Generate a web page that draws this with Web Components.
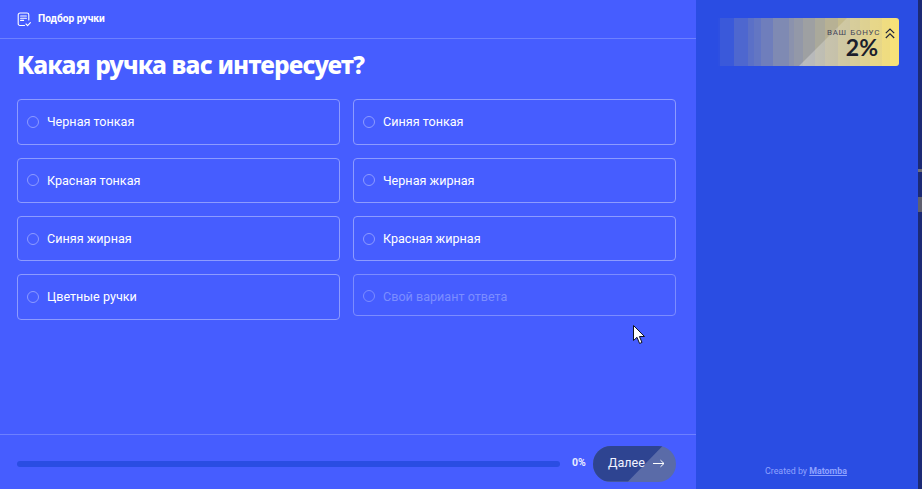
<!DOCTYPE html>
<html lang="ru"><head><meta charset="utf-8"><title>Подбор ручки</title>
<style>
html,body{margin:0;height:100%;overflow:hidden}
body{font-family:"Roboto","Noto Sans",sans-serif;background:#1c2a75}
</style></head><body>
<quiz-app>
  <quiz-main slot="main">
    <quiz-header>Подбор ручки</quiz-header>
    <h-title>Какая ручка вас интересует?</h-title>
    <quiz-options>
      <quiz-option>Черная тонкая</quiz-option>
      <quiz-option>Синяя тонкая</quiz-option>
      <quiz-option>Красная тонкая</quiz-option>
      <quiz-option>Черная жирная</quiz-option>
      <quiz-option>Синяя жирная</quiz-option>
      <quiz-option>Красная жирная</quiz-option>
      <quiz-option>Цветные ручки</quiz-option>
      <quiz-option placeholder>Свой вариант ответа</quiz-option>
    </quiz-options>
    <quiz-footer></quiz-footer>
    <mouse-cursor></mouse-cursor>
  </quiz-main>
  <quiz-side slot="side"></quiz-side>
</quiz-app>
<script>
function def(name, html){
  customElements.define(name, class extends HTMLElement{
    constructor(){super();this.attachShadow({mode:'open'}).innerHTML=html;}
  });
}
/* stepped colour bands of the bonus ribbon */
const edges=[0,2,16,30,36,43,55,71,76,85,97,107,120,132,142,152,164,172,181];
const bands=edges.slice(0,-1).map((e,i)=>{
  const n=edges[i+1],t=Math.pow((e+n)/2/181,.85);
  const c=[42+209*t,77+149*t,227-117*t].map(Math.round).join(',');
  return `rgb(${c}) ${e}px ${n}px`;
}).join(',');
def('quiz-app',`<style>:host{display:flex;width:922px;height:489px}
.s{width:4px;flex:none;background:linear-gradient(#1c2a75 0 169px,#6e6f78 169px 172px,#1c2a75 172px 197px,#5f6070 197px 212px,#1c2a75 212px)}</style>
<slot name="main"></slot><slot name="side"></slot><div class="s"></div>`);
def('quiz-main',`<style>:host{position:relative;display:flex;flex-direction:column;width:696px;height:489px;background:#465dff;color:#fff;flex:none}</style><slot></slot>`);
def('quiz-header',`<style>:host{display:flex;align-items:center;gap:7px;height:38px;padding-left:17px;border-bottom:1px solid #6d80ff;font:700 10.2px/1 "Roboto",sans-serif;flex:none}
svg{display:block}</style>
<svg width="14" height="15" viewBox="0 0 14 15" fill="none" stroke="#fff" stroke-width="1.1" stroke-linecap="round" stroke-linejoin="round"><path d="M7.5 13.5H3a1.8 1.8 0 0 1-1.8-1.8V2.8A1.8 1.8 0 0 1 3 1h7a1.8 1.8 0 0 1 1.8 1.8V8"/><path d="M3.6 4h5.8M3.6 6.2h5.8M3.6 8.4h3"/><path d="M9 12l1.6 1.6L13.4 10.6"/></svg><slot></slot>`);
def('h-title',`<style>:host{display:block;margin:10px 0 0 17px;height:31px;font:800 24.5px/31px "Noto Sans",sans-serif;letter-spacing:-.83px;white-space:nowrap;flex:none}</style><slot></slot>`);
def('quiz-options',`<style>:host{display:grid;grid-template-columns:323px 323px;column-gap:13px;row-gap:13px;grid-auto-rows:45.33px;margin:19.4px 0 0 17px;flex:none}</style><slot></slot>`);
customElements.define('quiz-option',class extends HTMLElement{
  constructor(){super();this.attachShadow({mode:'open'}).innerHTML=`<style>
  :host{display:flex;align-items:center;box-sizing:border-box;height:100%;padding:1px 0 0 9px;gap:8px;border:1px solid #8d9bff;border-radius:4px;font:400 12.6px/1 "Roboto",sans-serif;color:#fff;white-space:nowrap}
  :host([placeholder]){height:42px;border-color:#7c8cff;color:#7c8dff;padding-top:3px}
  :host([placeholder]) i{border-color:#7c8cff}
  i{width:10px;height:10px;border:1px solid #8d9bff;border-radius:50%;flex:none;margin-top:-1px}
  </style><i></i><slot></slot>`;}
});
def('quiz-footer',`<style>:host{display:flex;align-items:center;box-sizing:border-box;margin-top:auto;height:55px;padding:0 20px 0 17px;border-top:1px solid #6d80ff;flex:none}
.bar{flex:none;width:543px;height:6px;border-radius:3px;background:#2a4de3;margin-top:3px}
.pct{margin:3px 0 0 12px;width:21px;font:700 10.5px/1 "Roboto",sans-serif;color:#e8ebff}
.btn{position:relative;overflow:hidden;display:flex;align-items:center;gap:8px;box-sizing:border-box;width:83px;height:36px;border-radius:18px;padding-left:15px;background:#5a6ba8;color:#f0f2ff;font:400 12.6px/1 "Roboto",sans-serif;margin-top:3px}
.btn::before{content:"";position:absolute;inset:0;background:#2e4491;clip-path:polygon(0 0,70px 0,35px 36px,0 36px)}
.btn span,.btn svg{position:relative}
</style><div class="bar"></div><div class="pct">0%</div><div class="btn"><span>Далее</span><svg width="12" height="9" viewBox="0 0 12 9" fill="none" stroke="#fff" stroke-width="1"><path d="M0 4.5h11M7.5 1.2 11 4.5 7.5 7.8"/></svg></div>`);
def('quiz-side',`<style>:host{position:relative;display:block;width:222px;height:489px;background:#2a4de3;flex:none}
.bonus{position:absolute;left:22px;top:18px;width:181px;height:48px;border-radius:0 3px 3px 0;overflow:hidden;background:linear-gradient(90deg,${bands})}
.bonus::before{content:"";position:absolute;inset:0;background:linear-gradient(90deg,rgba(255,255,255,0) 0,rgba(255,255,255,.3) 81px,rgba(255,255,255,.05) 181px);clip-path:polygon(81px 48px,129px 0,181px 0,181px 48px)}
.t{position:absolute;right:19px;top:11px;font:400 8px/1 "Roboto",sans-serif;letter-spacing:.65px;word-spacing:1px;color:#44465a;white-space:nowrap}
.v{position:absolute;right:21px;top:18px;font:700 23px/1 "Lato","Noto Sans",sans-serif;color:#1b1e2c}
svg{position:absolute;right:4px;top:10px}
.c{position:absolute;left:69px;bottom:13px;white-space:nowrap;font:400 8.85px/1 "Roboto",sans-serif;color:#8fa2ff}
.c b{font-weight:700;text-decoration:underline}
</style><div class="bonus"><div class="t">ВАШ БОНУС</div><div class="v">2%</div>
<svg width="10" height="11" viewBox="0 0 10 11" fill="none" stroke="#23263a" stroke-width="1.2"><path d="M.8 5.2 5 1l4.2 4.2M.8 10 5 5.8 9.2 10"/></svg></div>
<div class="c">Created by <b>Matomba</b></div>`);
def('mouse-cursor',`<style>:host{position:absolute;left:633px;top:325px;display:block;width:13px;height:20px}</style>
<svg width="13" height="20" viewBox="0 0 13 20"><path d="M.5.5V15.5L4 12.3 6.6 18.5 9 17.4 6.4 11.5H11.5Z" fill="#fff" stroke="#10131f"/></svg>`);
</script>
</body></html>
